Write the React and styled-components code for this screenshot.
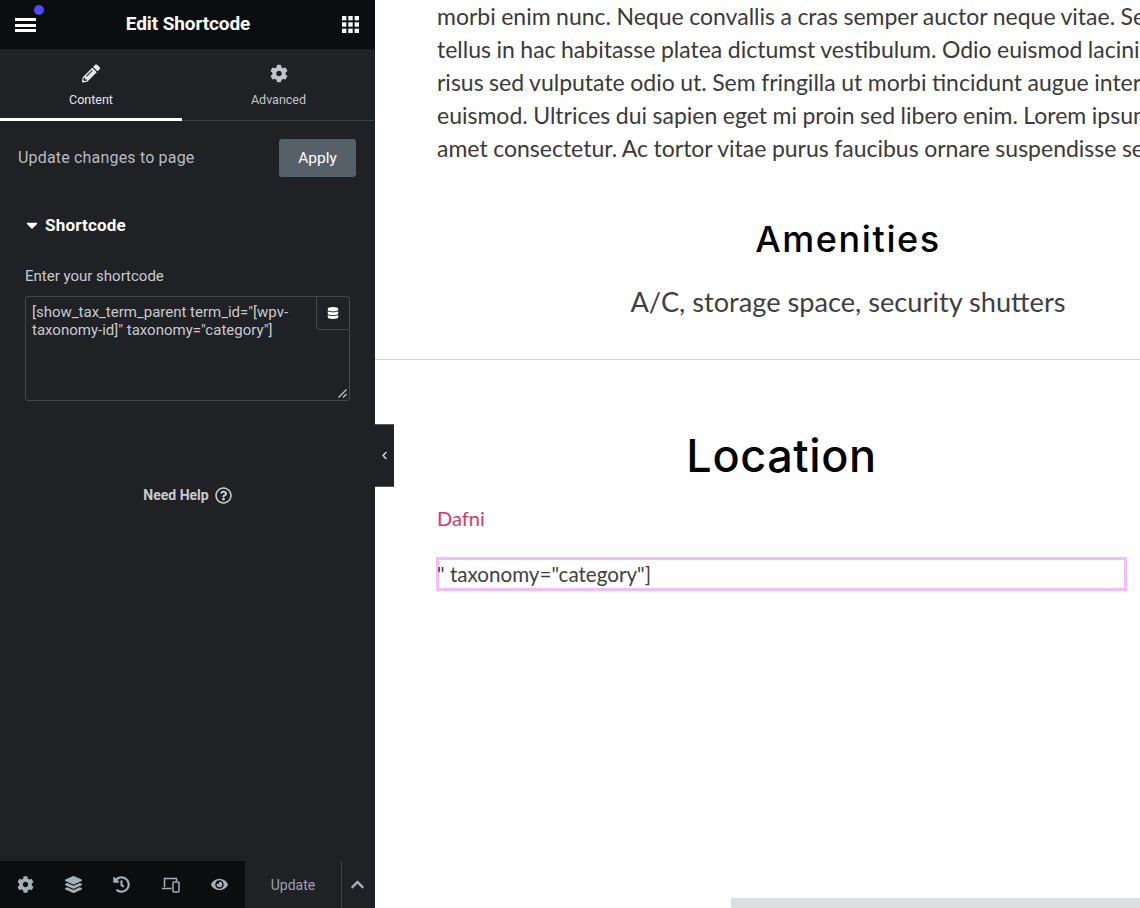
import React from 'react';
import styled, { createGlobalStyle } from 'styled-components';
import { FaPencilAlt, FaCog, FaLayerGroup, FaHistory, FaEye, FaDatabase, FaChevronUp, FaChevronLeft, FaCaretDown, FaRegQuestionCircle } from 'react-icons/fa';

const Global = createGlobalStyle`
  html, body { margin: 0; padding: 0; height: 100%; background: #fff; }
  * { box-sizing: border-box; }
`;

const Page = styled.div`
  display: flex;
  width: 100%;
  height: 908px;
  overflow: hidden;
  font-family: Roboto, sans-serif;
`;

const Panel = styled.aside`
  width: 375px;
  flex: none;
  display: flex;
  flex-direction: column;
  background: #1f2124;
  color: #d5d8dc;
`;

const Header = styled.header`
  height: 49px;
  flex: none;
  display: flex;
  align-items: center;
  justify-content: space-between;
  padding: 0 16px 0 15px;
  background: #0c0d0e;
`;

const MenuBtn = styled.div`
  position: relative;
  width: 21px;
  height: 14px;
  margin-top: 1px;
  display: flex;
  flex-direction: column;
  justify-content: space-between;
  span { display: block; height: 3px; background: #fff; }
`;

const Dot = styled.i`
  position: absolute;
  top: -13px;
  right: -8px;
  width: 10px;
  height: 10px;
  border-radius: 50%;
  background: #4a4cf5;
`;

const Title = styled.h1`
  margin: 0 2px 2px 0;
  font-size: 19px;
  line-height: 47px;
  font-weight: 700;
  color: #fff;
  letter-spacing: -0.1px;
`;

const Tabs = styled.div`
  height: 72px;
  flex: none;
  display: flex;
  border-bottom: 1px solid #3a3d42;
`;

const Tab = styled.div`
  width: ${p => (p.$active ? '182px' : '193px')};
  height: ${p => (p.$active ? '72px' : '71px')};
  display: flex;
  flex-direction: column;
  align-items: center;
  padding-top: 15px;
  gap: 9px;
  font-size: 12.5px;
  line-height: 15px;
  color: ${p => (p.$active ? '#e6e8ea' : '#c2c5ca')};
  border-bottom: ${p => (p.$active ? '3px solid #fff' : 'none')};
  svg { font-size: 18px; display: block; height: 19px; }
`;

const ApplyRow = styled.div`
  display: flex;
  align-items: center;
  justify-content: space-between;
  padding: 18px 19px 0 18px;
  font-size: 16px;
  color: #b8bbc0;
`;

const ApplyLabel = styled.span`
  margin-bottom: 2px;
  letter-spacing: 0.18px;
`;

const ApplyBtn = styled.div`
  width: 77px;
  height: 38px;
  display: flex;
  align-items: center;
  justify-content: center;
  background: #556068;
  border-radius: 3px;
  color: #fff;
  font-size: 15.5px;
  font-weight: 400;
`;

const SectionHead = styled.div`
  display: flex;
  align-items: center;
  gap: 4.5px;
  margin: 38px 0 0 25px;
  height: 20px;
  font-size: 17px;
  font-weight: 700;
  letter-spacing: 0.2px;
  color: #fff;
  svg { font-size: 18px; margin-left: -2.5px; }
`;

const FieldLabel = styled.div`
  margin: 31px 0 0 25px;
  font-size: 15px;
  line-height: 20px;
  color: #c8cbd0;
`;

const AreaBox = styled.div`
  position: relative;
  margin: 10px 25px 0;
  height: 105px;
  border: 1px solid #44474c;
  border-radius: 3px;
  padding: 6px 6px 0 6px;
  font-size: 15px;
  line-height: 18px;
  color: #c8cbd0;
`;

const DynamicTag = styled.div`
  position: absolute;
  top: -1px;
  right: -1px;
  width: 34px;
  height: 34px;
  display: flex;
  align-items: center;
  justify-content: center;
  border: 1px solid #44474c;
  border-radius: 0 3px 0 3px;
  background: #1f2124;
  color: #fff;
  font-size: 12px;
`;

const Grip = styled.svg`
  position: absolute;
  right: 2px;
  bottom: 2px;
  width: 9px;
  height: 9px;
`;

const Help = styled.div`
  margin-top: 85px;
  display: flex;
  align-items: center;
  justify-content: center;
  gap: 6px;
  font-size: 14px;
  line-height: 18px;
  font-weight: 700;
  color: #c8cbd0;
  svg { font-size: 17px; }
`;

const Footer = styled.footer`
  margin-top: auto;
  height: 47px;
  flex: none;
  display: flex;
`;

const FooterIcons = styled.div`
  width: 245px;
  display: flex;
  align-items: center;
  justify-content: space-around;
  padding: 0 1px;
  background: #0c0d0e;
  color: #a4afb7;
  font-size: 17px;
`;

const UpdateBtn = styled.div`
  width: 96px;
  display: flex;
  align-items: center;
  justify-content: center;
  font-size: 14px;
  color: #98a4ae;
`;

const UpArrow = styled.div`
  flex: 1;
  display: flex;
  align-items: center;
  justify-content: center;
  padding-right: 3px;
  border-left: 1px solid #3f4247;
  color: #a4afb7;
  font-size: 15px;
`;

const Preview = styled.main`
  position: relative;
  flex: 1;
  min-width: 0;
  overflow: hidden;
  background: #fff;
`;

const Toggle = styled.div`
  position: absolute;
  left: 0;
  top: 424px;
  width: 19px;
  height: 63px;
  display: flex;
  align-items: center;
  justify-content: center;
  background: #1f2124;
  color: #d5d8dc;
  font-size: 9px;
  border-top: 1px solid #55585c;
  border-bottom: 1px solid #55585c;
`;

const Intro = styled.section`
  width: 100%;
  height: 360px;
  padding-left: 62px;
  border-bottom: 1px solid #d0d3d6;
`;

const Column = styled.div`
  width: 822px;
`;

const Line = styled.div`
  font-family: Lato, sans-serif;
  font-size: 23px;
  word-spacing: -0.4px;
  line-height: 33px;
  color: #3a3a3a;
  white-space: nowrap;
`;

const Heading = styled.h2`
  margin: ${p => p.$top}px 0 0;
  font-family: Inter, sans-serif;
  font-weight: 500;
  font-size: ${p => p.$size}px;
  line-height: 1.2;
  letter-spacing: ${p => p.$track}px;
  text-align: center;
  color: #000;
`;

const Sub = styled.div`
  margin-top: 20px;
  font-family: Lato, sans-serif;
  font-size: 27.2px;
  line-height: 42px;
  text-align: center;
  color: #3f3f3f;
`;

const LocationBlock = styled.section`
  width: 689px;
  margin-left: 62px;
`;

const PinkLink = styled.div`
  margin-top: 20px;
  font-family: Lato, sans-serif;
  font-size: 20px;
  line-height: 30px;
  color: #d4386c;
`;

const ShortcodeBox = styled.div`
  margin: 24px 0 0 -1px;
  width: 691px;
  height: 34px;
  border: 3px solid #f4bcfb;
  text-indent: -2px;
  font-family: Lato, sans-serif;
  font-size: 20.6px;
  line-height: 28px;
  color: #3f3f3f;
`;

const Scrollbar = styled.div`
  position: absolute;
  left: 356px;
  right: 0;
  bottom: 0;
  height: 10px;
  background: #dcdfe2;
`;

const lines = [
  'morbi enim nunc. Neque convallis a cras semper auctor neque vitae. Sed',
  'tellus in hac habitasse platea dictumst vestibulum. Odio euismod lacinia',
  'risus sed vulputate odio ut. Sem fringilla ut morbi tincidunt augue interdum',
  'euismod. Ultrices dui sapien eget mi proin sed libero enim. Lorem ipsum',
  'amet consectetur. Ac tortor vitae purus faucibus ornare suspendisse sed',
];

function AppsIcon() {
  const cells = [];
  for (let y = 0; y < 3; y++) {
    for (let x = 0; x < 3; x++) {
      cells.push(<rect key={`${x}-${y}`} x={x * 6.5} y={y * 6.5} width="4.5" height="4.5" fill="#fff" />);
    }
  }
  return <svg width="17" height="17" viewBox="0 0 17.5 17.5">{cells}</svg>;
}

function DevicesIcon() {
  return (
    <svg width="18" height="16" viewBox="0 0 18 16" fill="none" stroke="#a4afb7" strokeWidth="1.5">
      <path d="M2.5 10V1.5H14.5V4" />
      <path d="M0 11.5H9.5" />
      <rect x="11" y="5" width="6" height="10" rx="1" />
    </svg>
  );
}

export default function App() {
  return (
    <Page>
      <Global />
      <Panel>
        <Header>
          <MenuBtn>
            <span /><span /><span />
            <Dot />
          </MenuBtn>
          <Title>Edit Shortcode</Title>
          <AppsIcon />
        </Header>
        <Tabs>
          <Tab $active><FaPencilAlt />Content</Tab>
          <Tab><FaCog />Advanced</Tab>
        </Tabs>
        <ApplyRow>
          <ApplyLabel>Update changes to page</ApplyLabel>
          <ApplyBtn>Apply</ApplyBtn>
        </ApplyRow>
        <SectionHead><FaCaretDown />Shortcode</SectionHead>
        <FieldLabel>Enter your shortcode</FieldLabel>
        <AreaBox>
          [show_tax_term_parent term_id="[wpv-<br />taxonomy-id]" taxonomy="category"]
          <DynamicTag><FaDatabase /></DynamicTag>
          <Grip viewBox="0 0 9 9" stroke="#c8cbd0" strokeWidth="1.2">
            <path d="M0.5 8.5L8.5 0.5M5 8.5L8.5 5" />
          </Grip>
        </AreaBox>
        <Help>Need Help <FaRegQuestionCircle /></Help>
        <Footer>
          <FooterIcons>
            <FaCog />
            <FaLayerGroup />
            <FaHistory />
            <DevicesIcon />
            <FaEye />
          </FooterIcons>
          <UpdateBtn>Update</UpdateBtn>
          <UpArrow><FaChevronUp /></UpArrow>
        </Footer>
      </Panel>
      <Preview>
        <Toggle><FaChevronLeft /></Toggle>
        <Intro>
          <Column>
            {lines.map(l => <Line key={l}>{l}</Line>)}
            <Heading $top={53} $size={36} $track={1.6}>Amenities</Heading>
            <Sub>A/C, storage space, security shutters</Sub>
          </Column>
        </Intro>
        <LocationBlock>
          <Heading $top={69} $size={45} $track={0.6}>Location</Heading>
          <PinkLink>Dafni</PinkLink>
          <ShortcodeBox>" taxonomy="category"]</ShortcodeBox>
        </LocationBlock>
        <Scrollbar />
      </Preview>
    </Page>
  );
}
